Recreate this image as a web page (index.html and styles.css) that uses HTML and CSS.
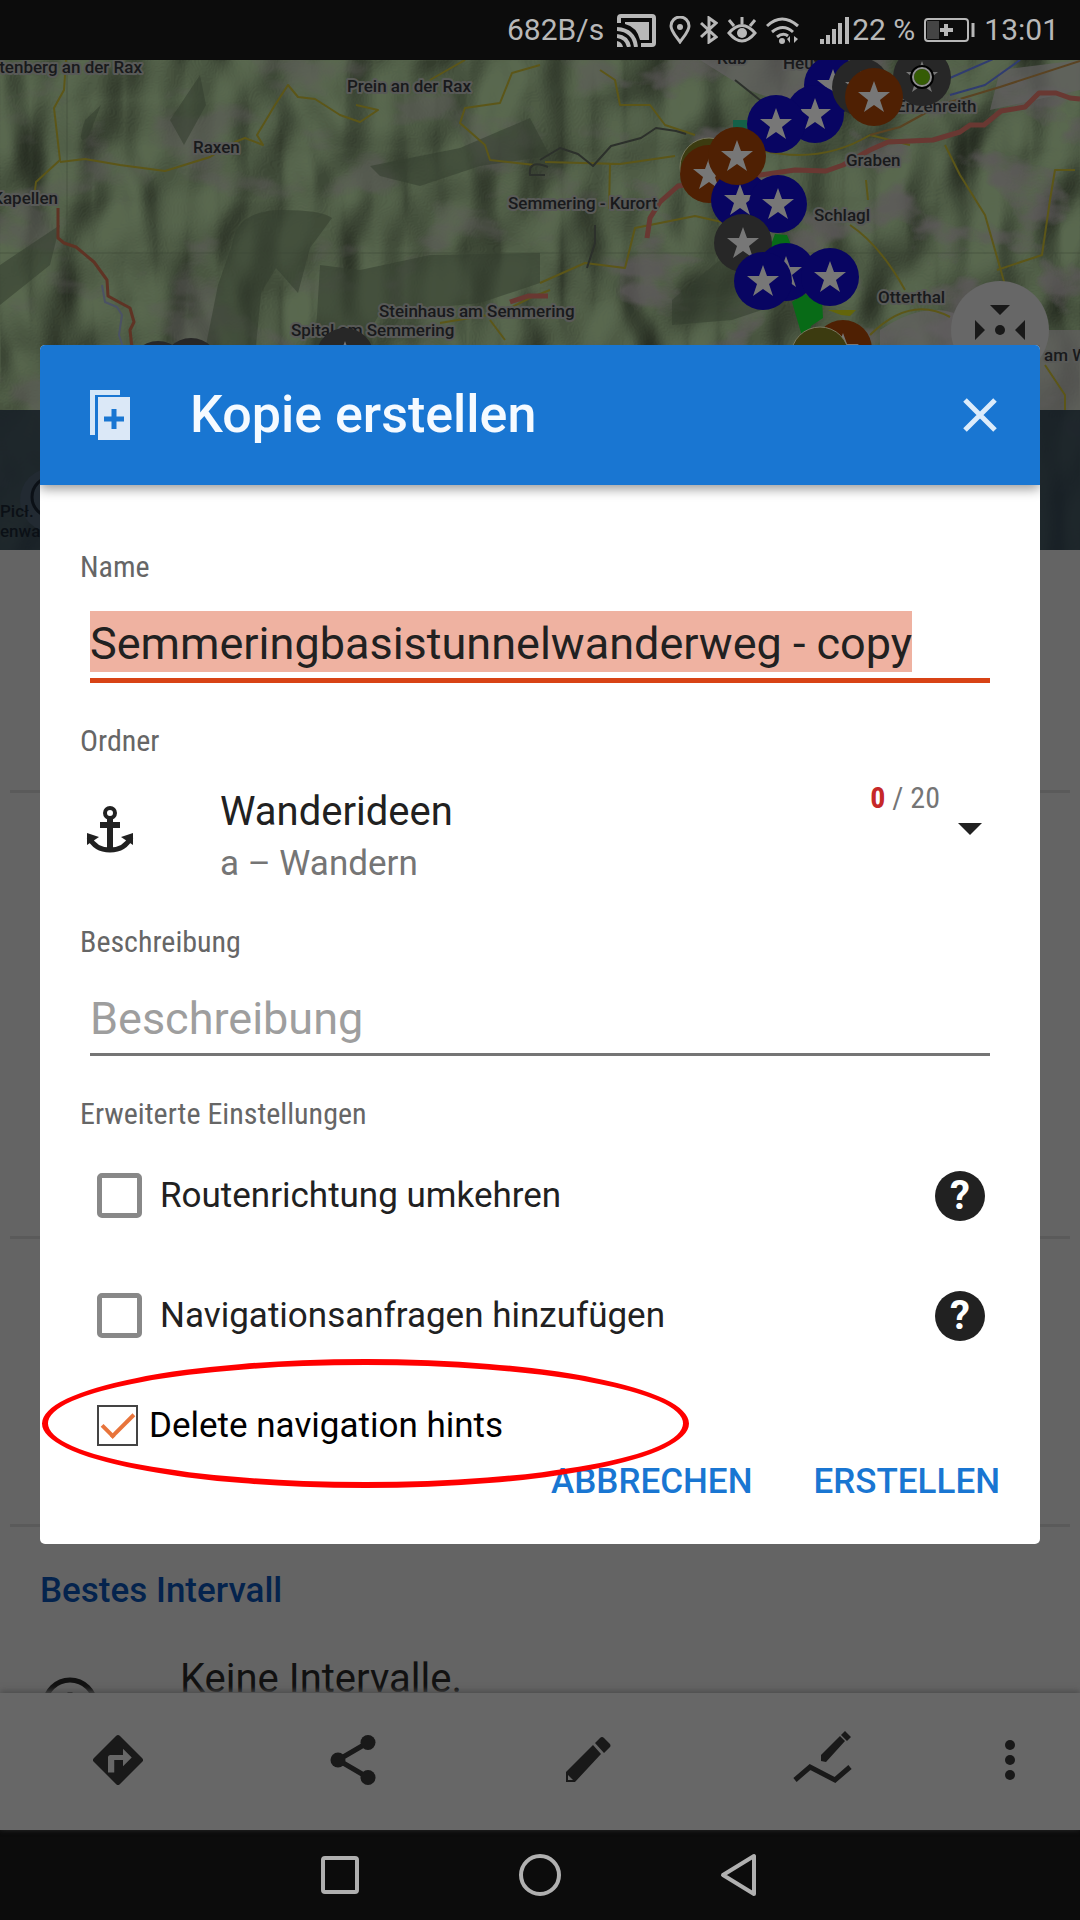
FILE: index.html
```html
<!DOCTYPE html>
<html lang="de">
<head>
<meta charset="utf-8">
<meta name="viewport" content="width=device-width">
<title>Kopie erstellen</title>
<link rel="stylesheet" href="styles.css">
</head>
<body>
<header class="status">
  <span>682B/s</span>
  <svg class="ic-cast" width="39" height="33" viewBox="0 0 39 33"><path d="M2 9V4q0-2 2-2h31q2 0 2 2v25q0 2-2 2H24" fill="none" stroke="currentColor" stroke-width="4"/><path d="M8 8h24v18h-9Q20 13 8 10z" fill="currentColor"/><path d="M0 15q17 1 19 18M0 22q10 1 12 11" fill="none" stroke="currentColor" stroke-width="4"/><path d="M0 27q5 1 6 6H0z" fill="currentColor"/></svg>
  <svg class="ic-pin" width="22" height="28" viewBox="0 0 22 28"><path d="M11 26C6 19 2 15 2 10a9 9 0 0 1 18 0c0 5-4 9-9 16z" fill="none" stroke="currentColor" stroke-width="3"/><circle cx="11" cy="11" r="3" fill="currentColor"/></svg>
  <svg class="ic-bt" width="18" height="28" viewBox="0 0 18 28"><path d="M1 7l15 14-7 5V2l7 5L1 21" fill="none" stroke="currentColor" stroke-width="3"/></svg>
  <svg class="ic-eye" width="30" height="26" viewBox="0 0 30 26"><path d="M2 16q13-15 26 0-13 16-26 0zM15 7V0M7 9L2 3M23 9l5-6" fill="none" stroke="currentColor" stroke-width="3"/><circle cx="15" cy="16" r="5" fill="currentColor"/></svg>
  <svg class="ic-wifi" width="33" height="27" viewBox="0 0 33 27"><path d="M1 9q15-14 31 0M6 15q11-9 21 0M11 20q6-5 11-1" fill="none" stroke="currentColor" stroke-width="3"/><circle cx="16" cy="24" r="3" fill="currentColor"/><path d="M21 22l3-3v7zM32 22l-4 4v-7z" fill="currentColor"/></svg>
  <svg class="ic-signal" width="29" height="27" viewBox="0 0 29 27"><path d="M2 27v-5M8 27v-9M14 27V12M20 27V6M27 27V0" stroke="currentColor" stroke-width="4"/></svg>
  <span>22 %</span>
  <svg class="ic-battery" width="51" height="26" viewBox="0 0 51 26"><rect x="1" y="2" width="43" height="22" rx="3" fill="none" stroke="currentColor" stroke-width="2"/><path d="M3 4h12v18H3z" fill="#444"/><path d="M22 7v12M16 13h13" stroke="currentColor" stroke-width="4"/><path d="M49 6v14" stroke="currentColor" stroke-width="3"/></svg>
  <span>13:01</span>
</header>

<main class="screen">
  <svg class="map" viewBox="0 60 1080 490" preserveAspectRatio="xMidYMin slice" aria-label="Karte">
    <defs>
      <filter id="relief" x="0" y="0" width="100%" height="100%" color-interpolation-filters="sRGB">
        <feTurbulence type="fractalNoise" baseFrequency="0.016 0.010" numOctaves="2" seed="7"/>
        <feDiffuseLighting surfaceScale="26" lighting-color="#5f6f55"><feDistantLight azimuth="215" elevation="58"/></feDiffuseLighting>
      </filter>
      <filter id="villages" x="0" y="0" width="100%" height="100%" color-interpolation-filters="sRGB">
        <feTurbulence type="fractalNoise" baseFrequency="0.013 0.02" numOctaves="4" seed="21"/>
        <feColorMatrix values="0 0 0 0 .37  0 0 0 0 .35  0 0 0 0 .36  6 0 0 0 -3.3"/>
      </filter>
      <path id="star" d="M0-16L4-5 16-5 6 3 10 15 0 8-10 15-6 3-16-5-4-5z" fill="#777"/>
      <g id="m-blue"><circle r="29" fill="#080562"/><use href="#star"/></g>
      <g id="m-orange"><circle r="29" fill="#4f2003"/><use href="#star"/></g>
      <g id="m-grey"><circle r="29" fill="#272727"/><use href="#star"/></g>
      <g id="m-olive"><circle r="29" fill="#3c3b10" stroke="#77775f" stroke-width="1"/></g>
    </defs>
    <rect y="60" width="1080" height="490" fill="#4a563f"/>
    <rect y="60" width="1080" height="490" filter="url(#relief)" opacity=".75"/>
    <rect y="60" width="1080" height="490" filter="url(#villages)" opacity=".45"/>
    <rect x="620" y="60" width="460" height="290" filter="url(#villages)" opacity=".55"/>
    <g fill="#343e2f" opacity=".55">
      <path d="M232 245q4-35 50-35 40 0 50 8l-22 30-12 45-22-25-15 25-5 52h-50l12-60z"/>
      <path d="M320 265l40 5 70-15 110-2v30l-60 20-100 10-20 35h-45z"/>
      <path d="M530 118l-70 30-90 18 10 10 40 10 60-20 70-10z"/>
      <path d="M672 300l60-50 30 0 60 40-90 30-60 5z"/>
      <path d="M85 120q-10 30 4 15l12-30zM170 120l14 25 22-40-6-30zM0 265l60-40-10 40-50 40z"/>
    </g>
    <path d="M700 60h140v30q-60 20-100-5zM1000 70l80-10v30l-90 20zM880 330q60-40 100 0l100 0v80H880z" fill="#626061" opacity=".7"/>
    <path d="M0 253h1080M67 60v350" stroke="#3b4534" opacity=".5"/>
    <g fill="none" stroke-linejoin="round">
      <g stroke="#5c5618" stroke-width="2">
        <path d="M66 60l-2 30-10 18 6 52-24 22-2 16M60 162l25-3 35 6 45 6 45-14 25-15 10-4 18 7-6-10 18-30 13-20 10 12 17 2 25 16 20 7 18-12-22-5"/>
        <path d="M465 60l-35 20M540 65l-28 8-12 30-35 5-5 15 25 22 5 15 45 5"/>
        <path d="M600 70l15 10 5 25 30 0 15 20 30 10M545 162l75 2 55-8M610 164l-1 45M540 283l45-20 40 5 10-40 60-12 45 10"/>
        <path d="M760 150q60 15 110-15l40 10M850 225q30 20 55 65M868 200l-2-20M945 145l15 30 25 40 20 70M1075 170h-20l-5 30-8 55-45 15"/>
        <path d="M440 323l60-10 30-15 20-8M490 320l15 20M870 335q40-40 80-18M1045 365l20 30v15"/>
      </g>
      <path d="M58 208v30l6 5 12 4 18 15 13 18 1 16 9 5 13 7 4 14-4 8 2 18" stroke="#5f3324" stroke-width="3"/>
      <path d="M102 285l3 17 12 5 5 8-3 20 5 15" stroke="#4b5264" stroke-width="2"/>
      <path d="M647 238l3-20 10-16 18-16 82-11 35-5 31 1 17-6 27-15 18-8 45-2 27-8 10-7h14l17-14 24-4 14-14h17l14 5 10 1M510 302l18-6h20" stroke="#693832" stroke-width="5"/>
      <path d="M870 135l30-8 40-22 60-18 80-26" stroke="#5a4322" stroke-width="2"/>
      <path d="M950 95l35-10 35-25M950 78l50-22" stroke="#303c70" stroke-width="2"/>
      <path d="M540 160l20-12 18 6 15 12 18-20 30-8 15-10 20 3 10 3M735 80l30 24M595 225v18l-8 25M548 167q-20-8-18 8l15 0" stroke="#2c302b" stroke-width="2"/>
    </g>
    <path d="M733 120h14v10h-14z" fill="#146048"/>
    <path d="M775 234l12 1 5 12h-22zM792 302l12-8 18 6 1 18-12 8-2 10h-7z" fill="#086b17"/>
    <path d="M828 310h28l-6 6-9-1z" fill="#63650b"/>
    <g class="place">
      <text x="142" y="73" text-anchor="end">ltenberg an der Rax</text>
      <text x="347" y="92">Prein an der Rax</text>
      <text x="193" y="153">Raxen</text>
      <text x="58" y="204" text-anchor="end">Kapellen</text>
      <text x="508" y="209">Semmering - Kurort</text>
      <text x="379" y="317">Steinhaus am Semmering</text>
      <text x="291" y="336">Spital am Semmering</text>
      <text x="717" y="64">Küb</text>
      <text x="783" y="69">Heufeld</text>
      <text x="896" y="112">Enzenreith</text>
      <text x="846" y="166">Graben</text>
      <text x="814" y="221">Schlagl</text>
      <text x="878" y="303">Otterthal</text>
      <text x="1044" y="361">am Wald</text>
    </g>
    <use href="#m-blue" x="833" y="85"/><use href="#m-blue" x="815" y="114"/><use href="#m-blue" x="776" y="124"/>
    <use href="#m-grey" x="861" y="87"/><use href="#m-grey" x="922" y="77"/><use href="#m-orange" x="874" y="97"/>
    <circle cx="922" cy="77" r="10" fill="#355c05" stroke="#000" stroke-width="4"/><circle cx="922" cy="77" r="9" fill="none" stroke="#8f8f8f" stroke-width="2"/>
    <use href="#m-olive" x="709" y="167"/><use href="#m-orange" x="709" y="174"/>
    <use href="#m-blue" x="740" y="200"/><use href="#m-blue" x="778" y="204"/><use href="#m-orange" x="737" y="156"/>
    <use href="#m-grey" x="743" y="243"/><use href="#m-blue" x="786" y="272"/><use href="#m-blue" x="763" y="281"/><use href="#m-blue" x="830" y="277"/>
    <use href="#m-orange" x="843" y="349"/><use href="#m-olive" x="820" y="356"/>
    <use href="#m-grey" x="158" y="370"/><use href="#m-grey" x="191" y="367"/><use href="#m-grey" x="345" y="357"/>
    <circle cx="1000" cy="330" r="49" fill="#676767"/>
    <path d="M990 305h20l-10 10zM975 320v20l10-10zM1025 320v20l-10-10z" fill="#191919"/><circle cx="1000" cy="330" r="5" fill="#191919"/>
    <rect y="410" width="1080" height="140" fill="#171f27" opacity=".88"/>
    <circle cx="52" cy="500" r="32" fill="#222a32"/><circle cx="52" cy="497" r="20" fill="none" stroke="#0b1016" stroke-width="3"/>
    <g class="place place-dark">
      <text x="0" y="517">Picł.</text>
      <text x="0" y="537">enwang</text>
    </g>
  </svg>

  <section class="details">
    <div class="stats stats-short"></div>
    <div class="stats stats-tall"></div>
    <div class="stats"></div>
    <h2>Bestes Intervall</h2>
    <div class="interval">
      <svg width="60" height="60" viewBox="0 0 60 60"><circle cx="30" cy="30" r="25" fill="none" stroke="#111" stroke-width="5"/><path d="M30 17v16" stroke="#111" stroke-width="5"/></svg>
      <span>Keine Intervalle.</span>
    </div>
  </section>

  <nav class="toolbar" aria-label="Aktionen">
    <button aria-label="Navigieren"><svg width="60" height="60" viewBox="0 0 24 24"><path d="M21.7 11.3l-9-9a1 1 0 0 0-1.4 0l-9 9a1 1 0 0 0 0 1.4l9 9a1 1 0 0 0 1.4 0l9-9a1 1 0 0 0 0-1.4zM14 14.500V12h-3.500v5H8v-6q0-1 1-1h5V7.500l3.500 3.500z"/></svg></button>
    <button aria-label="Teilen"><svg width="60" height="60" viewBox="0 0 24 24"><path d="M18 5L6 12l12 7" fill="none" stroke="currentColor" stroke-width="2"/><circle cx="18" cy="5" r="3"/><circle cx="6" cy="12" r="3"/><circle cx="18" cy="19" r="3"/></svg></button>
    <button aria-label="Bearbeiten"><svg width="60" height="60" viewBox="0 0 60 60"><path d="M8 52V42L35 15l8 9L17 52zM37 13l5-5q2-2 4 0l6 6q1 2 0 3l-6 6z"/><path d="M10 45v5h5z" fill="#676767"/></svg></button>
    <button aria-label="Route planen"><svg width="60" height="60" viewBox="0 0 60 60"><path d="M2 50l15-13 25 13 15-13" fill="none" stroke="currentColor" stroke-width="5"/><path d="M28 31v-6l19-19 5 5-19 21zM48 5l4-4 6 6-4 4z"/></svg></button>
    <button class="more" aria-label="Mehr"><svg width="20" height="60" viewBox="0 0 20 60"><circle cx="10" cy="15" r="5"/><circle cx="10" cy="30" r="5"/><circle cx="10" cy="45" r="5"/></svg></button>
  </nav>

  <form class="dialog" role="dialog" aria-labelledby="title">
    <header class="dialog-head">
      <svg width="60" height="60" viewBox="0 0 60 60"><path d="M10 5h30v5H15v40h-5z" fill="#d5e7f8"/><path d="M18 12h32v43H18z" fill="#dbe8f7"/><path d="M34 24v20M24 34h20" stroke="#1976d2" stroke-width="5"/></svg>
      <h1 id="title">Kopie erstellen</h1>
      <button type="button" class="close" aria-label="Schließen"><svg width="34" height="34" viewBox="0 0 34 34"><path d="M2 2l30 30M32 2L2 32" stroke="#dcecfb" stroke-width="5"/></svg></button>
    </header>
    <div class="dialog-body">
      <label class="caption" for="name">Name</label>
      <div class="field field-active"><input id="name" class="selected" type="text" value="Semmeringbasistunnelwanderweg - copy"></div>

      <span class="caption" id="folder-label">Ordner</span>
      <button type="button" class="folder" aria-labelledby="folder-label folder-name" aria-haspopup="listbox">
        <svg width="60" height="60" viewBox="0 0 60 60"><circle cx="30" cy="14" r="5" fill="none" stroke="currentColor" stroke-width="4"/><path d="M30 18v32M20 26h20" fill="none" stroke="currentColor" stroke-width="6"/><path d="M9 38q6 13 21 13t21-13" fill="none" stroke="currentColor" stroke-width="5"/><path d="M7 46V34l12 4zM53 46V34l-12 4z" fill="currentColor"/></svg>
        <span class="folder-text"><span id="folder-name">Wanderideen</span><small>a – Wandern</small></span>
        <span class="count"><b>0</b> / 20</span>
        <svg class="arrow" width="24" height="12" viewBox="0 0 24 12"><path d="M0 0h24L12 12z" fill="currentColor"/></svg>
      </button>

      <label class="caption" for="desc">Beschreibung</label>
      <div class="field"><input id="desc" type="text" placeholder="Beschreibung"></div>

      <span class="caption">Erweiterte Einstellungen</span>
      <div class="option">
        <label><input type="checkbox">Routenrichtung umkehren</label>
        <button type="button" class="help" aria-label="Hilfe">?</button>
      </div>
      <div class="option">
        <label><input type="checkbox">Navigationsanfragen hinzufügen</label>
        <button type="button" class="help" aria-label="Hilfe">?</button>
      </div>
      <div class="option option-marked">
        <label><input type="checkbox" checked>Delete navigation hints</label>
      </div>
      <div class="actions">
        <button type="button">ABBRECHEN</button>
        <button type="submit">ERSTELLEN</button>
      </div>
    </div>
  </form>
</main>

<nav class="system" aria-label="System">
  <button aria-label="Übersicht"><svg width="44" height="44" viewBox="0 0 44 44"><rect x="5" y="5" width="34" height="34" rx="2"/></svg></button>
  <button aria-label="Startseite"><svg width="44" height="44" viewBox="0 0 44 44"><circle cx="22" cy="22" r="19"/></svg></button>
  <button aria-label="Zurück"><svg width="44" height="44" viewBox="0 0 44 44"><path d="M5 22L36 3v38z" stroke-linejoin="round"/></svg></button>
</nav>
</body>
</html>
```
FILE: styles.css
```css
*, *::after { box-sizing: border-box; }

body {
  margin: 0;
  height: 100vh;
  display: flex;
  flex-direction: column;
  overflow: hidden;
  font-family: Roboto, "Liberation Sans", sans-serif;
  color: #212121;
  background: #646464;
}

button {
  border: 0;
  padding: 0;
  background: none;
  font: inherit;
  color: inherit;
}

svg { display: block; flex: none; }

/* status bar */
.status {
  height: 60px;
  flex: none;
  display: flex;
  align-items: center;
  justify-content: flex-end;
  gap: 9px;
  padding: 0 21px;
  background: #0c0c0c;
  color: #b8b8b8;
  font-size: 30px;
  line-height: 60px;
}
.ic-cast { margin: 0 4px; }
.ic-signal { margin: 0 -6px 0 12px; }

/* dimmed app behind the dialog */
.screen {
  flex: 1;
  min-height: 0;
  position: relative;
  display: flex;
  flex-direction: column;
}
.map { width: 100%; height: 490px; }
.place {
  font-size: 17px;
  font-weight: 500;
  fill: #191a1c;
  stroke: #585957;
  stroke-width: 4px;
  stroke-linejoin: round;
  paint-order: stroke;
}
.place-dark { fill: #0b1016; stroke: none; }

.details {
  flex: 1;
  min-height: 0;
  overflow: hidden;
}
.stats {
  height: 288px;
  margin: 0 10px;
  border-bottom: 3px solid #5a5a5a;
}
.stats-short { height: 243px; }
.stats-tall { height: 446px; }
.details h2 {
  margin: 40px 40px 0;
  font-size: 35px;
  line-height: 48px;
  font-weight: 500;
  color: #04234d;
}
.interval {
  display: flex;
  gap: 80px;
  padding: 40px 40px 0;
  font-size: 40px;
  line-height: 48px;
  color: #111;
}
.interval svg { margin-top: 20px; }

.toolbar {
  position: relative;
  flex: none;
  height: 137px;
  display: flex;
  align-items: center;
  padding-bottom: 4px;
  background: #676767;
  color: #191919;
  box-shadow: 0 -2px 6px #4c4c4c;
}
.toolbar button { flex: 235; display: grid; place-items: center; }
.toolbar .more { flex: 140; }
.toolbar svg { fill: currentColor; }

/* dialog */
.dialog {
  position: absolute;
  top: 285px;
  left: 40px;
  right: 40px;
  border-radius: 5px;
  background: #fff;
}
.dialog-head {
  height: 140px;
  display: flex;
  align-items: center;
  padding: 0 43px 0 40px;
  border-radius: 5px 5px 0 0;
  background: #1976d2;
  box-shadow: 0 4px 12px rgba(0, 0, 0, .4);
  clip-path: inset(0 0 -20px 0);
}
.dialog-head h1 {
  margin: 0 auto 0 50px;
  font-size: 52px;
  line-height: 60px;
  font-weight: 500;
  color: #f5faff;
}
.dialog-body { padding: 60px 40px 40px; }

.caption {
  display: block;
  font-family: "Roboto Condensed", "Liberation Sans Narrow", Roboto, sans-serif;
  font-size: 30px;
  line-height: 44px;
  color: #666;
}

.field {
  height: 70px;
  margin: 22px 10px 36px;
  border-bottom: 3px solid #757575;
}
.field-active { height: 72px; border-bottom: 5px solid #d84315; }
.field input {
  display: block;
  width: 100%;
  height: 61px;
  padding: 4px 0 0;
  border: 0;
  outline: 0;
  background: none;
  font: 45px/57px Roboto, sans-serif;
  color: #212121;
}
.field .selected {
  width: auto;
  field-sizing: content;
  background: #efb2a1;
}
.field input::placeholder { color: #9e9e9e; opacity: 1; }

.folder {
  width: 100%;
  height: 132px;
  margin-bottom: 25px;
  display: flex;
  align-items: center;
  text-align: left;
}
.folder-text {
  flex: 1;
  margin-left: 80px;
  padding-top: 18px;
  font-size: 40px;
  line-height: 52px;
}
.folder-text small {
  display: block;
  font-size: 35px;
  color: #757575;
}
.count {
  align-self: flex-start;
  margin-top: 17px;
  font-family: "Roboto Condensed", Roboto, sans-serif;
  font-size: 30px;
  line-height: 36px;
  color: #757575;
}
.count b { color: #c62828; }
.arrow { margin: 0 18px; }

.option {
  height: 120px;
  display: flex;
  align-items: center;
  justify-content: space-between;
  padding: 0 15px 0 17px;
  font-size: 35px;
  line-height: 44px;
}
.option label { display: flex; align-items: center; gap: 18px; }
.option input {
  appearance: none;
  width: 45px;
  height: 45px;
  margin: 0 0 2px;
  border: 5px solid #888;
  border-radius: 5px;
}
.help {
  width: 50px;
  height: 50px;
  border-radius: 50%;
  background: #212121;
  color: #fff;
  font-size: 40px;
  line-height: 50px;
  font-weight: 700;
}

.option-marked {
  position: relative;
  height: 84px;
  padding-top: 16px;
  color: #000;
}
.option-marked label { gap: 11px; }
.option-marked input {
  display: grid;
  width: 41px;
  height: 41px;
  border: 2px solid #444;
  border-radius: 0;
}
.option-marked input::after {
  content: "";
  place-self: center;
  width: 32px;
  height: 17px;
  margin-bottom: 8px;
  border: solid #e8743b;
  border-width: 0 0 4px 4px;
  transform: rotate(-45deg);
}
/* highlight ring around the option */
.option-marked::after {
  content: "";
  position: absolute;
  z-index: 1;
  left: -38px;
  top: -17px;
  width: 647px;
  height: 129px;
  border: 6px solid #f00;
  border-radius: 50%;
  pointer-events: none;
}

.actions {
  display: flex;
  justify-content: flex-end;
  gap: 61px;
  font-size: 35px;
  line-height: 44px;
  font-weight: 500;
  color: #1976d2;
}

/* system navigation */
.system {
  flex: none;
  height: 90px;
  display: flex;
  align-items: center;
  justify-content: center;
  gap: 156px;
  background: #0c0c0c;
  color: #b0b0b0;
}
.system svg { fill: none; stroke: currentColor; stroke-width: 4; }
```
